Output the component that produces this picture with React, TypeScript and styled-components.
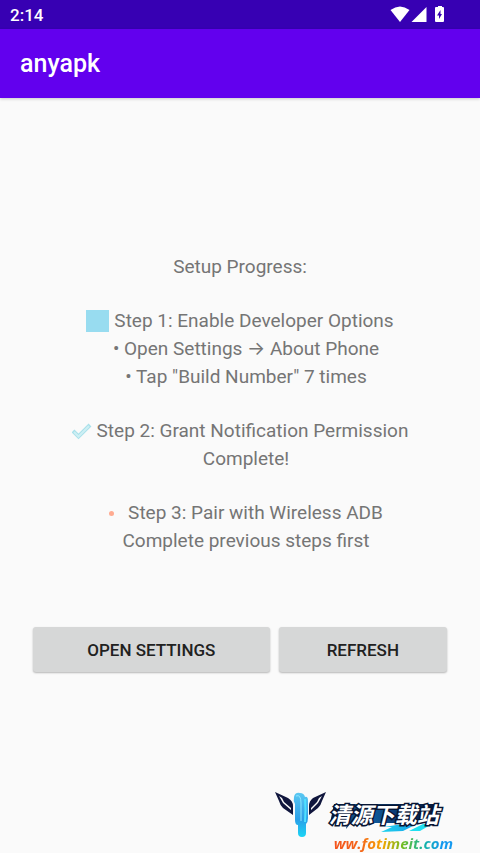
import React from "react";
import styled, { createGlobalStyle } from "styled-components";

const GlobalStyle = createGlobalStyle`
  *, *::before, *::after { box-sizing: border-box; }
  body {
    margin: 0;
    background: #fafafa;
    font-family: Roboto, "Noto Sans", sans-serif;
  }
`;

const Screen = styled.div`
  position: relative;
  display: flex;
  flex-direction: column;
  min-height: 100vh;
`;

const StatusBar = styled.div`
  display: flex;
  align-items: center;
  justify-content: space-between;
  height: 29px;
  padding: 0 34px 0 10px;
  background: #3700b3;
  color: #fff;
`;

const Clock = styled.time`
  font-size: 17px;
  line-height: 20px;
  font-weight: 500;
`;

const StatusIcons = styled.div`
  display: flex;
  align-items: center;
  svg { display: block; }
`;

const AppBar = styled.header`
  display: flex;
  align-items: center;
  height: 69px;
  padding: 0 20px;
  background: #6200ee;
  box-shadow: 0 1px 3px rgba(0, 0, 0, 0.2);
`;

const Title = styled.h1`
  margin: 0;
  color: #fff;
  font-size: 25px;
  line-height: 32px;
  font-weight: 500;
`;

const Main = styled.main`
  flex: 1;
  display: flex;
  flex-direction: column;
  justify-content: center;
  gap: 72px;
  padding: 0 33px 26px;
`;

const Progress = styled.section`
  display: flex;
  flex-direction: column;
  gap: 26px;
  color: #757575;
  font-size: 19px;
  line-height: 28px;
  text-align: center;
`;

const Line = styled.p<{ $indent?: boolean }>`
  display: flex;
  align-items: center;
  justify-content: center;
  margin: 0;
  padding-left: ${(p) => (p.$indent ? 12 : 0)}px;
  white-space: pre;
  svg { flex: none; }
`;

const Arrow = styled.span`
  font-family: Inter, sans-serif;
`;

const Marker = styled.span<{ $gap: number }>`
  display: flex;
  flex: none;
  margin-right: ${(p) => p.$gap}px;
`;

const Square = styled.span`
  width: 23px;
  height: 22px;
  background: #98dcf0;
`;

const Dot = styled.span`
  width: 5px;
  height: 5px;
  border-radius: 50%;
  background: #ffab91;
`;

const Actions = styled.div`
  display: grid;
  grid-template-columns: 236fr 168fr;
  gap: 9px;
`;

const Button = styled.button`
  height: 45px;
  padding: 0;
  border: 0;
  border-radius: 3px;
  background: #d6d7d7;
  box-shadow: 0 1px 2px rgba(0, 0, 0, 0.28);
  color: #212121;
  font-family: inherit;
  font-size: 17px;
  line-height: 24px;
  font-weight: 500;
  text-transform: uppercase;
`;

const Watermark = styled.div`
  position: absolute;
  right: 24px;
  bottom: 0;
  display: flex;
  align-items: flex-start;
  gap: 2px;
`;

const Brand = styled.div`
  display: flex;
  flex-direction: column;
  padding-top: 6px;
`;

const BrandName = styled.div`
  position: relative;
  height: 36px;
  svg { position: absolute; left: 0; top: 6px; }
`;

const BrandText = styled.span`
  position: relative;
  color: #fff;
  font-family: "Noto Sans CJK SC", sans-serif;
  font-size: 22px;
  line-height: 30px;
  font-weight: 700;
  font-style: italic;
  white-space: nowrap;
  -webkit-text-stroke: 3px #071534;
  paint-order: stroke fill;
`;

const Domain = styled.span`
  padding: 0 3px 0 5px;
  background: linear-gradient(90deg, #f4511e 0%, #f4661b 25%, #f6a400 42%, #70bd22 58%, #15b5a0 74%, #1499ef 88%);
  background-clip: text;
  -webkit-background-clip: text;
  color: transparent;
  font-family: "Open Sans", sans-serif;
  font-size: 15px;
  line-height: 19px;
  font-weight: 700;
  font-style: italic;
  white-space: nowrap;
`;

function SystemIcons() {
  return (
    <StatusIcons>
      <svg width="56" height="18" viewBox="0 0 56 18" fill="#fff" aria-label="Wi-Fi, signal, battery">
        <path d="M0.500 4Q10 -3 19.500 4L10 16Z" />
        <path d="M36.500 1V16H21.500Z" />
        <path d="M46 1h2V0h4V1h1q1 0 1 1v13q0 1-1 1h-7q-1 0-1-1V2q0-1 1-1Z" />
        <path d="M50.500 4L47 9.500H49V13L52 8H50.500Z" fill="#3700b3" />
      </svg>
    </StatusIcons>
  );
}

function CheckIcon() {
  return (
    <svg width="20" height="18" viewBox="0 0 20 18" fill="none" aria-label="Done">
      <path d="M1 9L6.500 14.500L18 3" stroke="#a9e0ea" strokeWidth="4" />
      <path d="M2 10L6.500 14.500L17 4" stroke="#cdeff4" strokeWidth="2" />
    </svg>
  );
}

function WingLogo() {
  return (
    <svg width="52" height="61" viewBox="0 0 52 61" aria-hidden="true">
      <defs>
        <linearGradient id="stream" x1="0" y1="0" x2="0" y2="1">
          <stop offset="0" stopColor="#5bc8f2" />
          <stop offset="0.600" stopColor="#2b9fe8" />
          <stop offset="1" stopColor="#1bd5f5" />
        </linearGradient>
      </defs>
      <path d="M0 0L13 6Q18 9 18 14V23L8 16Q5 13 4 9Z" fill="#10163d" />
      <path d="M4 4L8 11L16 18V16L9 10L7 6Z" fill="#fafafa" />
      <path d="M51 0L38 6Q34 9 34 14V23L43 16Q46 13 47 9Z" fill="#10163d" />
      <path d="M47 4L43 11L36 18V16L42 10L44 6Z" fill="#fafafa" />
      <path d="M19 5Q20 0 25 1Q29 1 30 5Q33 4 33 9V26Q33 30 31 32V41Q31 45 27 45Q23 45 23 41V33Q20 33 20 28V12Q18 9 19 5Z" fill="url(#stream)" />
      <path d="M21 4Q26 2 26 11V29" fill="none" stroke="#8fe6ff" strokeWidth="1" />
      <path d="M30 7Q31 18 30 30" fill="none" stroke="#4fe0ff" strokeWidth="2" />
    </svg>
  );
}

function BrandBackdrop() {
  return (
    <svg width="112" height="30" viewBox="0 0 112 30" aria-hidden="true">
      <defs>
        <linearGradient id="backdrop" x1="0" x2="1">
          <stop offset="0" stopColor="#071534" />
          <stop offset="0.300" stopColor="#1268ad" />
          <stop offset="0.600" stopColor="#0a3c75" />
          <stop offset="1" stopColor="#071534" />
        </linearGradient>
        <linearGradient id="swoosh" x1="0" x2="1">
          <stop offset="0" stopColor="#20d5ee" />
          <stop offset="1" stopColor="#1598e8" />
        </linearGradient>
      </defs>
      <path d="M5 0H110L105 19H22L17 25L18 19H1Z" fill="url(#backdrop)" />
      <path d="M52 28L63 23H55L86 18H92L74 27Z" fill="url(#swoosh)" />
      <path d="M94 20H103L91 27H80Z" fill="#20dff0" />
    </svg>
  );
}

export default function App() {
  return (
    <>
      <GlobalStyle />
      <Screen>
        <StatusBar>
          <Clock>2:14</Clock>
          <SystemIcons />
        </StatusBar>
        <AppBar>
          <Title>anyapk</Title>
        </AppBar>
        <Main>
          <Progress>
            <Line>Setup Progress:</Line>
            <div>
              <Line><Marker $gap={5}><Square /></Marker>Step 1: Enable Developer Options</Line>
              <Line $indent>• Open Settings <Arrow>→</Arrow> About Phone</Line>
              <Line $indent>• Tap "Build Number" 7 times</Line>
            </div>
            <div>
              <Line><Marker $gap={5}><CheckIcon /></Marker>Step 2: Grant Notification Permission</Line>
              <Line $indent>Complete!</Line>
            </div>
            <div>
              <Line $indent><Marker $gap={14}><Dot /></Marker>Step 3: Pair with Wireless ADB</Line>
              <Line $indent>Complete previous steps first</Line>
            </div>
          </Progress>
          <Actions>
            <Button type="button">Open Settings</Button>
            <Button type="button">Refresh</Button>
          </Actions>
        </Main>
        <Watermark>
          <WingLogo />
          <Brand>
            <BrandName>
              <BrandBackdrop />
              <BrandText>清源下载站</BrandText>
            </BrandName>
            <Domain>ww.fotimeit.com</Domain>
          </Brand>
        </Watermark>
      </Screen>
    </>
  );
}
